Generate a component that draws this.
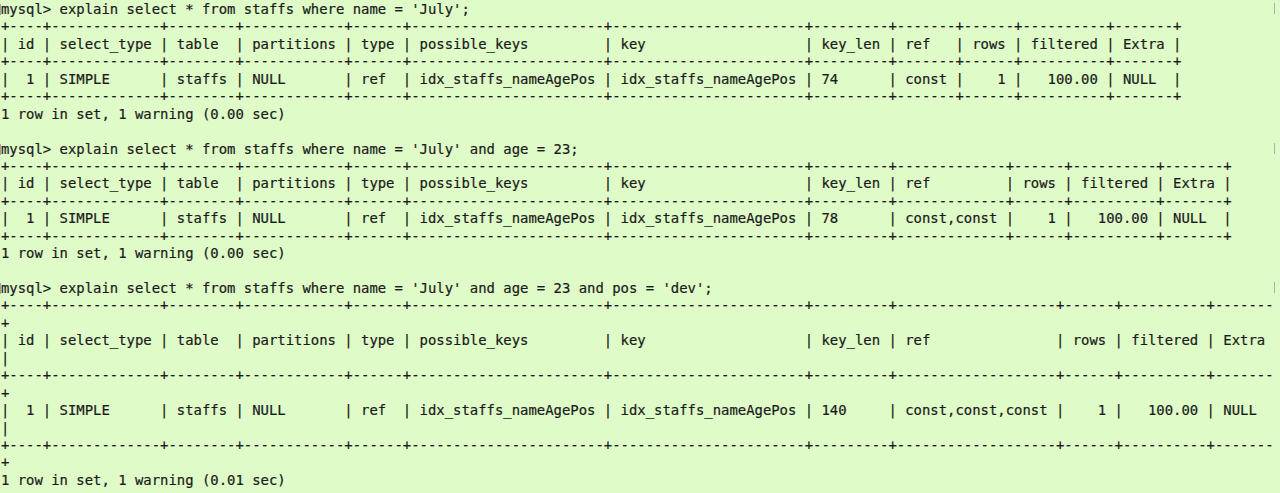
import React from "react";

const HEADERS = ["id", "select_type", "table", "partitions", "type", "possible_keys", "key", "key_len", "ref", "rows", "filtered", "Extra"];
const RIGHT = [true, false, false, false, false, false, false, false, false, true, true, false];
const TERM_COLS = 152;

function buildTable(row) {
  const widths = HEADERS.map((h, i) => Math.max(h.length, row[i].length));
  const border = "+" + widths.map((w) => "-".repeat(w + 2)).join("+") + "+";
  const line = (vals, alignRight) =>
    "|" +
    vals
      .map((v, i) => " " + (alignRight && RIGHT[i] ? v.padStart(widths[i]) : v.padEnd(widths[i])) + " ")
      .join("|") +
    "|";
  return [border, line(HEADERS, false), border, line(row, true), border];
}

function wrap(s) {
  const out = [];
  for (let i = 0; i < s.length; i += TERM_COLS) out.push(s.slice(i, i + TERM_COLS));
  return out.length ? out : [""];
}

const blocks = [
  {
    q: "mysql> explain select * from staffs where name = 'July';",
    row: ["1", "SIMPLE", "staffs", "NULL", "ref", "idx_staffs_nameAgePos", "idx_staffs_nameAgePos", "74", "const", "1", "100.00", "NULL"],
    t: "1 row in set, 1 warning (0.00 sec)",
  },
  {
    q: "mysql> explain select * from staffs where name = 'July' and age = 23;",
    row: ["1", "SIMPLE", "staffs", "NULL", "ref", "idx_staffs_nameAgePos", "idx_staffs_nameAgePos", "78", "const,const", "1", "100.00", "NULL"],
    t: "1 row in set, 1 warning (0.00 sec)",
  },
  {
    q: "mysql> explain select * from staffs where name = 'July' and age = 23 and pos = 'dev';",
    row: ["1", "SIMPLE", "staffs", "NULL", "ref", "idx_staffs_nameAgePos", "idx_staffs_nameAgePos", "140", "const,const,const", "1", "100.00", "NULL"],
    t: "1 row in set, 1 warning (0.01 sec)",
  },
];

const lines = [];
blocks.forEach((b, bi) => {
  lines.push({ text: b.q, prompt: true });
  buildTable(b.row).forEach((l) => wrap(l).forEach((w) => lines.push({ text: w })));
  lines.push({ text: b.t });
  if (bi < blocks.length - 1) lines.push({ text: "" });
});

export default function App() {
  return (
    <div className="w-[1280px] h-[493px] overflow-hidden bg-[#dffcc8] text-[#1a1a1a] font-['DejaVu_Sans_Mono',monospace] text-[13.92px] leading-[17.44px] pt-px [-webkit-text-stroke:0.2px_#1a1a1a]">
      {lines.map((l, i) => (
        <div key={i} className="relative h-[17.44px] whitespace-pre pl-px">
          {l.text || " "}
          {l.prompt && (
            <>
              <span className="absolute left-0 top-[3px] w-px h-[11px] bg-[#a3a3a3]" />
              <span className="absolute right-[5px] top-[2px] w-px h-[11px] bg-[#b0b0b0]" />
            </>
          )}
        </div>
      ))}
    </div>
  );
}
